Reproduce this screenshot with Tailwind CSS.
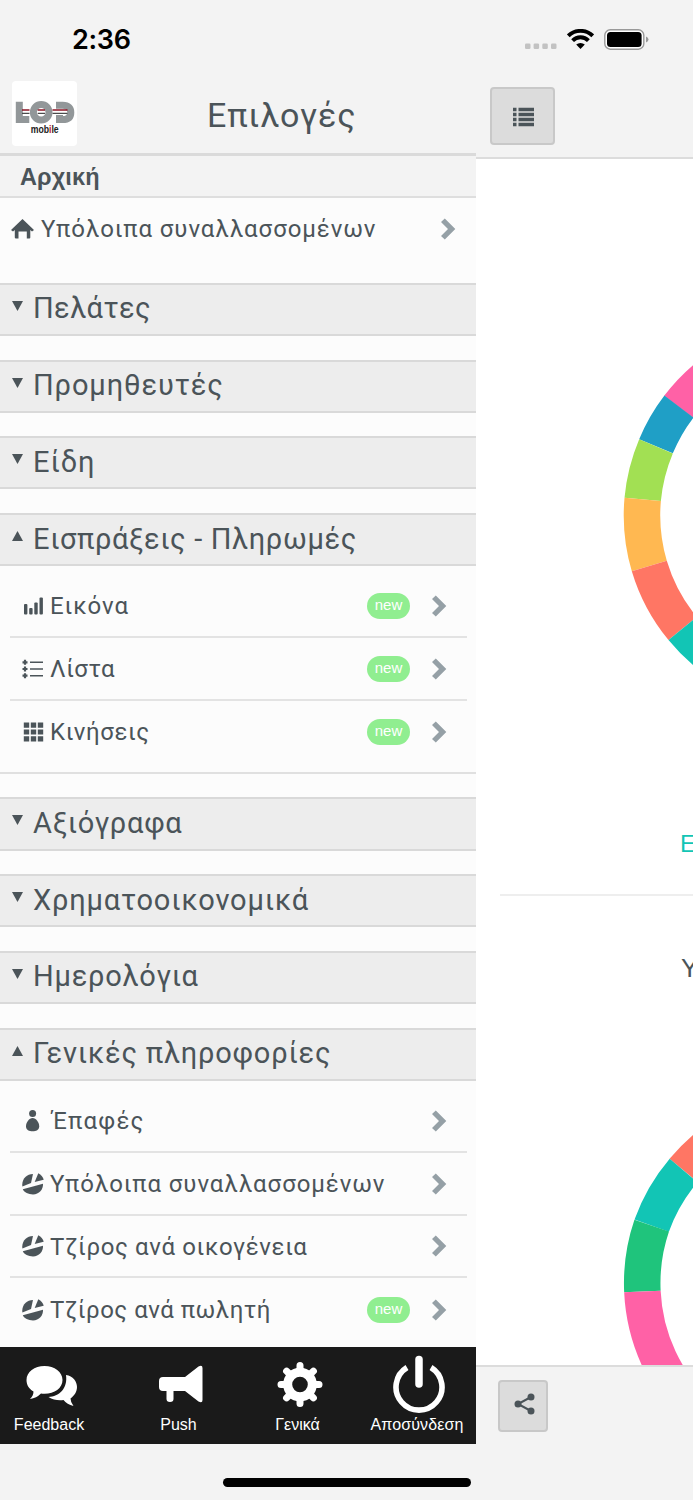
<!DOCTYPE html>
<html lang="el">
<head>
<meta charset="utf-8">
<title>LOD mobile</title>
<script src="https://cdn.jsdelivr.net/npm/@tailwindcss/browser@4"></script>
</head>
<body class="bg-[#f3f3f3] text-[#4b5459] font-['Roboto','Liberation_Sans',sans-serif]">
<svg class="hidden">
  <symbol id="chev" viewBox="0 0 15 22"><path d="M0 4 3.8 .4 14.3 11 3.8 21.6 0 18 7 11Z" fill="#95a0a6"/></symbol>
  <symbol id="pie" viewBox="0 0 22 22"><g fill="#4b5459"><path d="M.4 13.6C-.7 6.200 4.500.9 11 .9L9 10.100Z"/><path d="M16.300 .3C19 1.500 21 4 21.700 6.700L12.700 9.100Z"/><path d="M.8 16.300 21 10.700C21.400 16.500 17 21.300 11 21.400 6.200 21.400 2.400 19.500 .8 16.300Z"/></g></symbol>
</svg>
<div class="relative flex h-[1500px] w-[693px] overflow-hidden">

  <!-- Side menu -->
  <aside class="flex h-[1500px] w-[476px] shrink-0 flex-col">
    <header class="flex h-[156px] shrink-0 items-start border-b-[3px] border-[#dadada] pt-[81px] pl-3">
      <div class="h-[65px] w-[65px] shrink-0 rounded bg-white">
        <svg class="block" width="65" height="65" viewBox="0 0 65 65">
          <g fill="none" stroke="#929799" stroke-width="7"><path d="M7.300 20.700V38.500H17.300"/><circle cx="29.200" cy="31.300" r="7.800"/><path d="M44 24.200H50.500Q58.800 24.500 58.800 31.400 58.800 38.500 50.500 38.500H47.500V34"/></g>
          <path d="M10 29H17.500M25.700 29H33M40.500 29H55.500" stroke="#8c1525" stroke-width="1.600"/>
          <path d="M10 32.400H17.500M25.700 32.400H33M40.500 32.400H55.500" stroke="#4b4b4b" stroke-width="1.200"/>
          <text x="32.700" y="52" text-anchor="middle" font-size="10" font-weight="600" textLength="28" lengthAdjust="spacingAndGlyphs" fill="#222" font-family="Liberation Sans, sans-serif">mob<tspan fill="#c01828">i</tspan>le</text>
        </svg>
      </div>
      <h1 class="mt-[14px] ml-[130px] text-[34px] leading-[40px] tracking-[0.850px] whitespace-nowrap">Επιλογές</h1>
    </header>
    <h2 class="h-[42px] shrink-0 border-b-2 border-[#dedede] pl-5 font-['Liberation_Sans'] text-[23.500px] leading-[42px] font-bold tracking-[0.100px]">Αρχική</h2>
    <div class="flex h-[1149px] shrink-0 flex-col overflow-hidden bg-[#fcfcfc]">
      <div class="flex h-[61px] shrink-0 items-center pr-5 pl-[11px]">
        <svg width="23" height="20" viewBox="0 0 23 20"><path d="M11.500 0 23 11 21 12.600 19.300 11V18.500Q19.300 19.500 18.300 19.500H15.800V12.500H7.500V19.500H5Q3.800 19.500 3.800 18.500V11L2 12.600 0 11Z" fill="#4b5459"/></svg>
        <span class="ml-[7px] flex-1 text-[24px] tracking-[0.930px] whitespace-nowrap">Υπόλοιπα συναλλασσομένων</span>
        <svg width="15" height="22"><use href="#chev"/></svg>
      </div>

      <div class="mt-6 flex h-[53px] shrink-0 items-center border-y-2 border-[#d9d9d9] bg-[#ededed] pl-3 text-[29px] tracking-[0.400px]"><svg class="mb-2" width="11" height="10"><path d="M0 0H11L5.500 10Z" fill="#4b5459"/></svg><span class="mb-[2px] ml-[10px]">Πελάτες</span></div>
      <div class="mt-6 flex h-[53px] shrink-0 items-center border-y-2 border-[#d9d9d9] bg-[#ededed] pl-3 text-[29px] tracking-[0.900px]"><svg class="mb-2" width="11" height="10"><path d="M0 0H11L5.500 10Z" fill="#4b5459"/></svg><span class="mb-[2px] ml-[10px]">Προμηθευτές</span></div>
      <div class="mt-[23px] flex h-[53px] shrink-0 items-center border-y-2 border-[#d9d9d9] bg-[#ededed] pl-3 text-[29px] tracking-[0.900px]"><svg class="mb-2" width="11" height="10"><path d="M0 0H11L5.500 10Z" fill="#4b5459"/></svg><span class="ml-[10px]">Είδη</span></div>
      <div class="mt-6 flex h-[53px] shrink-0 items-center border-y-2 border-[#d9d9d9] bg-[#ededed] pl-3 text-[29px] tracking-[0.650px]"><svg class="mb-2" width="11" height="10"><path d="M0 10H11L5.500 0Z" fill="#4b5459"/></svg><span class="ml-[10px]">Εισπράξεις - Πληρωμές</span></div>

      <div class="flex h-[208px] shrink-0 flex-col border-b-2 border-[#e0e0e0] pt-[9px] pr-[9px] pl-[10px] text-[24px] tracking-[0.930px]">
        <div class="flex h-[63px] items-center border-b-2 border-[#e3e3e3] pr-5 pl-3">
          <svg width="22" height="22" fill="#4b5459"><rect x="2" y="9" width="3.400" height="10.500" rx="1"/><rect x="7.200" y="13" width="3.400" height="6.500" rx="1"/><rect x="12.300" y="7.500" width="3.400" height="12" rx="1"/><rect x="17.500" y="2.500" width="3.400" height="17" rx="1"/></svg>
          <span class="mt-px ml-[6px] flex-1">Εικόνα</span>
          <span class="mr-[22px] h-[26px] w-[43px] rounded-full bg-[#90ee90] text-center font-['Liberation_Sans'] text-[15px] leading-[24px] tracking-normal text-white">new</span>
          <svg width="15" height="22"><use href="#chev"/></svg>
        </div>
        <div class="flex h-[63px] items-center border-b-2 border-[#e3e3e3] pr-5 pl-3">
          <svg width="22" height="22" fill="#4b5459"><path d="M8 4.300H21M8 11H21M8 17.700H21" stroke="#4b5459" stroke-width="1.600"/><path d="M.5 4.300H5.500M.5 11H5.500M.5 17.700H5.500M3 1.800V6.800M3 8.500V13.500M3 15.200V20.200" stroke="#4b5459" stroke-width="2.200"/></svg>
          <span class="ml-[6px] flex-1 tracking-[0.400px]">Λίστα</span>
          <span class="mr-[22px] h-[26px] w-[43px] rounded-full bg-[#90ee90] text-center font-['Liberation_Sans'] text-[15px] leading-[24px] tracking-normal text-white">new</span>
          <svg width="15" height="22"><use href="#chev"/></svg>
        </div>
        <div class="flex h-[62px] items-center pr-5 pl-3">
          <svg width="22" height="22"><path d="M4.500 1.500V21M11.500 1.500V21M18.500 1.500V21" stroke="#4b5459" stroke-width="5.400" stroke-dasharray="5.200 1.700"/></svg>
          <span class="ml-[6px] flex-1 tracking-[0.650px]">Κινήσεις</span>
          <span class="mr-[22px] h-[26px] w-[43px] rounded-full bg-[#90ee90] text-center font-['Liberation_Sans'] text-[15px] leading-[24px] tracking-normal text-white">new</span>
          <svg width="15" height="22"><use href="#chev"/></svg>
        </div>
      </div>

      <div class="mt-[23px] flex h-[54px] shrink-0 items-center border-y-2 border-[#d9d9d9] bg-[#ededed] pl-3 text-[29px] tracking-[0.750px]"><svg class="mb-2" width="11" height="10"><path d="M0 0H11L5.500 10Z" fill="#4b5459"/></svg><span class="ml-[10px]">Αξιόγραφα</span></div>
      <div class="mt-[23px] flex h-[53px] shrink-0 items-center border-y-2 border-[#d9d9d9] bg-[#ededed] pl-3 text-[29px] tracking-[0.800px]"><svg class="mb-2" width="11" height="10"><path d="M0 0H11L5.500 10Z" fill="#4b5459"/></svg><span class="ml-[10px]">Χρηματοοικονομικά</span></div>
      <div class="mt-6 flex h-[53px] shrink-0 items-center border-y-2 border-[#d9d9d9] bg-[#ededed] pl-3 text-[29px] tracking-[0.750px]"><svg class="mb-2" width="11" height="10"><path d="M0 0H11L5.500 10Z" fill="#4b5459"/></svg><span class="mb-[2px] ml-[10px]">Ημερολόγια</span></div>
      <div class="mt-6 flex h-[53px] shrink-0 items-center border-y-2 border-[#d9d9d9] bg-[#ededed] pl-3 text-[29px] tracking-[0.800px]"><svg class="mb-2" width="11" height="10"><path d="M0 10H11L5.500 0Z" fill="#4b5459"/></svg><span class="mb-[2px] ml-[10px]">Γενικές πληροφορίες</span></div>

      <div class="flex shrink-0 flex-col pt-[9px] pr-[9px] pl-[10px] text-[24px] tracking-[0.930px]">
        <div class="flex h-[63px] items-center border-b-2 border-[#e3e3e3] pr-5 pl-3">
          <svg width="22" height="22" fill="#4b5459"><circle cx="10.600" cy="3.600" r="3.500"/><path d="M10.600 8C14 8 17.200 12.500 17.200 16.200 17.200 20 14 21.300 10.600 21.300S4 20 4 16.200C4 12.500 7.200 8 10.600 8Z"/></svg>
          <span class="mt-px ml-[8px] flex-1 tracking-[1.200px]">Έπαφές</span>
          <svg width="15" height="22"><use href="#chev"/></svg>
        </div>
        <div class="flex h-[63px] items-center border-b-2 border-[#e3e3e3] pr-5 pl-3">
          <svg width="22" height="22"><use href="#pie"/></svg>
          <span class="ml-[6px] flex-1 whitespace-nowrap">Υπόλοιπα συναλλασσομένων</span>
          <svg width="15" height="22"><use href="#chev"/></svg>
        </div>
        <div class="flex h-[62px] items-center border-b-2 border-[#e3e3e3] pr-5 pl-3">
          <svg width="22" height="22"><use href="#pie"/></svg>
          <span class="mt-px ml-[6px] flex-1 tracking-[0.630px]">Τζίρος ανά οικογένεια</span>
          <svg width="15" height="22"><use href="#chev"/></svg>
        </div>
        <div class="flex h-[63px] items-center pr-5 pl-3">
          <svg width="22" height="22"><use href="#pie"/></svg>
          <span class="ml-[6px] flex-1 tracking-[0.500px]">Τζίρος ανά πωλητή</span>
          <span class="mr-[22px] h-[26px] w-[43px] rounded-full bg-[#90ee90] text-center font-['Liberation_Sans'] text-[15px] leading-[24px] tracking-normal text-white">new</span>
          <svg width="15" height="22"><use href="#chev"/></svg>
        </div>
      </div>
    </div>

    <nav class="flex h-[97px] shrink-0 bg-[#1a1a1a] font-['Liberation_Sans'] text-[16px] leading-5 text-white">
      <div class="flex w-[98px] shrink-0 flex-col items-center"><svg class="ml-[6px]" width="52" height="68" viewBox="0 0 52 68" fill="#fff"><path d="M18.500 19C28.500 19 36.500 25 36.500 33S28.500 46.800 18.500 46.800Q16.500 46.800 15 46.500 10.500 51 4 52Q7.500 48.500 7.500 44.500C3 42 .5 38 .5 33 .5 25 8.500 19 18.500 19Z"/><path d="M40 28C47 29 51 34.500 51 40 51 45 48 49 44.500 51.500Q44.500 55 47.500 59 41 57.500 37.500 53Q29 54 22.500 50C33 49.500 42 41.500 40 28Z"/></svg><span>Feedback</span></div>
      <div class="flex w-[161px] shrink-0 flex-col items-center"><svg class="ml-[5px]" width="44" height="68" viewBox="0 0 44 68" fill="#fff"><path d="M4 30H26L39.500 19.500Q43.500 17.500 43.500 21V53Q43.500 56.500 39.500 54.500L26 44H14.500V52Q14.500 55 11 55T7.500 52V44H4Q0 44 0 40V34Q0 30 4 30Z"/></svg><span>Push</span></div>
      <div class="flex w-[77px] shrink-0 flex-col items-center"><svg class="ml-[5px]" width="46" height="68" viewBox="-23 -37.500 46 68"><g stroke="#fff" stroke-width="7" stroke-linecap="round"><path d="M0-19V-14M0 19V14M-19 0H-14M19 0H14M-13.400-13.400-10-10M13.400 13.400 10 10M-13.400 13.400-10 10M13.400-13.400 10-10"/></g><circle r="12.300" fill="none" stroke="#fff" stroke-width="9"/></svg><span>Γενικά</span></div>
      <div class="flex w-[140px] flex-col items-center pl-[22px]"><svg class="ml-1" width="52" height="68" viewBox="0 0 52 68" fill="none" stroke="#fff"><path d="M14 20.500A23 23 0 1 0 38 20.500" stroke-width="5.600"/><path d="M26 12.500V37" stroke-width="7.500" stroke-linecap="round"/></svg><span class="tracking-[0.100px]">Αποσύνδεση</span></div>
    </nav>
  </aside>

  <!-- Page pushed to the right by the menu -->
  <main class="flex h-[1500px] w-[217px] shrink-0 flex-col">
    <header class="h-[159px] shrink-0 border-b-2 border-[#dcdcdc] pt-[87px] pl-[14px]">
      <div class="flex h-[58px] w-[65px] items-center justify-center rounded border-2 border-[#c8c8c8] bg-[#dcdcdc]">
        <svg width="21" height="20" viewBox="0 0 21 20" class="mt-px ml-[2px]"><path d="M0 2.500H3.500M5.500 2.500H21M0 7.500H3.500M5.500 7.500H21M0 12.500H3.500M5.500 12.500H21M0 17.500H3.500M5.500 17.500H21" stroke="#4b5459" stroke-width="3.500"/></svg>
      </div>
    </header>
    <div class="flex h-[1206px] shrink-0 flex-col overflow-hidden bg-white font-['Liberation_Sans']">
      <svg class="mt-[141px] block shrink-0" width="217" height="430" viewBox="476 300 217 430">
        <g stroke-width="36.500" fill="none">
          <path d="M821 336.250A178.750 178.750 0 0 0 678.700 406.800" stroke="#ff61a6"/>
          <path d="M678.900 406.600A178.750 178.750 0 0 0 656 446.300" stroke="#1f9fc6"/>
          <path d="M656 446.300A178.750 178.750 0 0 0 642.700 499.400" stroke="#a2e053"/>
          <path d="M642.700 499.400A178.750 178.750 0 0 0 649.300 566" stroke="#ffb851"/>
          <path d="M649.300 566A178.750 178.750 0 0 0 682.600 628.500" stroke="#ff7664"/>
          <path d="M682.600 628.500A178.750 178.750 0 0 0 821 693.750" stroke="#12c5b5"/>
        </g>
      </svg>
      <div class="mt-[100px] pl-[204px] text-[24px] leading-7 whitespace-nowrap text-[#12c5b5]">Ε</div>
      <div class="mt-[36px] ml-6 h-[2px] shrink-0 bg-[#eeeeee]"></div>
      <div class="mt-[58px] pl-[205px] text-[26px] leading-7 whitespace-nowrap">Υ</div>
      <svg class="mt-[88px] block shrink-0" width="217" height="296" viewBox="476 1070 217 296">
        <g stroke-width="36.500" fill="none">
          <path d="M821 1106A178.750 178.750 0 0 0 683.600 1170.500" stroke="#ff7664"/>
          <path d="M683.600 1170.500A178.750 178.750 0 0 0 651.700 1225.700" stroke="#12c5b5"/>
          <path d="M651.700 1225.700A178.750 178.750 0 0 0 642.400 1291.500" stroke="#1fc47c"/>
          <path d="M642.400 1291.500A178.750 178.750 0 0 0 700 1415" stroke="#ff61a6"/>
        </g>
      </svg>
    </div>
    <footer class="flex-1 border-t-2 border-[#dcdcdc] pt-[13px] pl-[22px]">
      <div class="flex h-[52px] w-[50px] items-center justify-center rounded border-2 border-[#c8c8c8] bg-[#dcdcdc]">
        <svg class="mb-1 ml-[3px]" width="21" height="22" viewBox="0 0 21 22" fill="#4b5459"><path d="M17 4 4 11 17 18" fill="none" stroke="#4b5459" stroke-width="2"/><circle cx="17" cy="4" r="3.500"/><circle cx="4" cy="11" r="3.500"/><circle cx="17" cy="18" r="3.500"/></svg>
      </div>
    </footer>
  </main>

  <!-- System overlays -->
  <div class="absolute top-0 left-0 flex h-[78px] w-full items-center pr-[44px] pl-[72px] text-black">
    <span class="mt-[3px] flex-1 font-['Inter'] text-[27px] font-semibold tracking-[-0.300px]">2:36</span>
    <svg width="32" height="22" fill="#c2c2c2"><rect x="0" y="15.500" width="5.500" height="5.500" rx="1.300"/><rect x="8.600" y="15.500" width="5.500" height="5.500" rx="1.300"/><rect x="17.300" y="15.500" width="5.500" height="5.500" rx="1.300"/><rect x="26" y="15.500" width="5.500" height="5.500" rx="1.300"/></svg>
    <svg class="ml-[10px]" width="27" height="20" viewBox="0 0 27 20" fill="none" stroke="#000" stroke-width="3.900"><path d="M1.300 6.800A17.500 17.500 0 0 1 25.700 6.800"/><path d="M5.600 11.600A11 11 0 0 1 21.400 11.600"/><path d="M9.200 15.600A6.300 6.300 0 0 1 17.800 15.600L13.500 20Z" fill="#000" stroke="none"/></svg>
    <svg class="ml-[10px]" width="45" height="21" viewBox="0 0 45 21"><rect x=".8" y=".8" width="39" height="19.400" rx="5.500" fill="#fff" stroke="#999" stroke-width="1.400"/><rect x="3" y="3" width="34.600" height="15" rx="3.500"/><path d="M42 7.500Q44.500 8.500 44.500 10.500T42 13.500Z" fill="#999"/></svg>
  </div>
  <div class="absolute top-[1478px] left-[223px] h-[9px] w-[248px] rounded-full bg-black"></div>
</div>
</body>
</html>
